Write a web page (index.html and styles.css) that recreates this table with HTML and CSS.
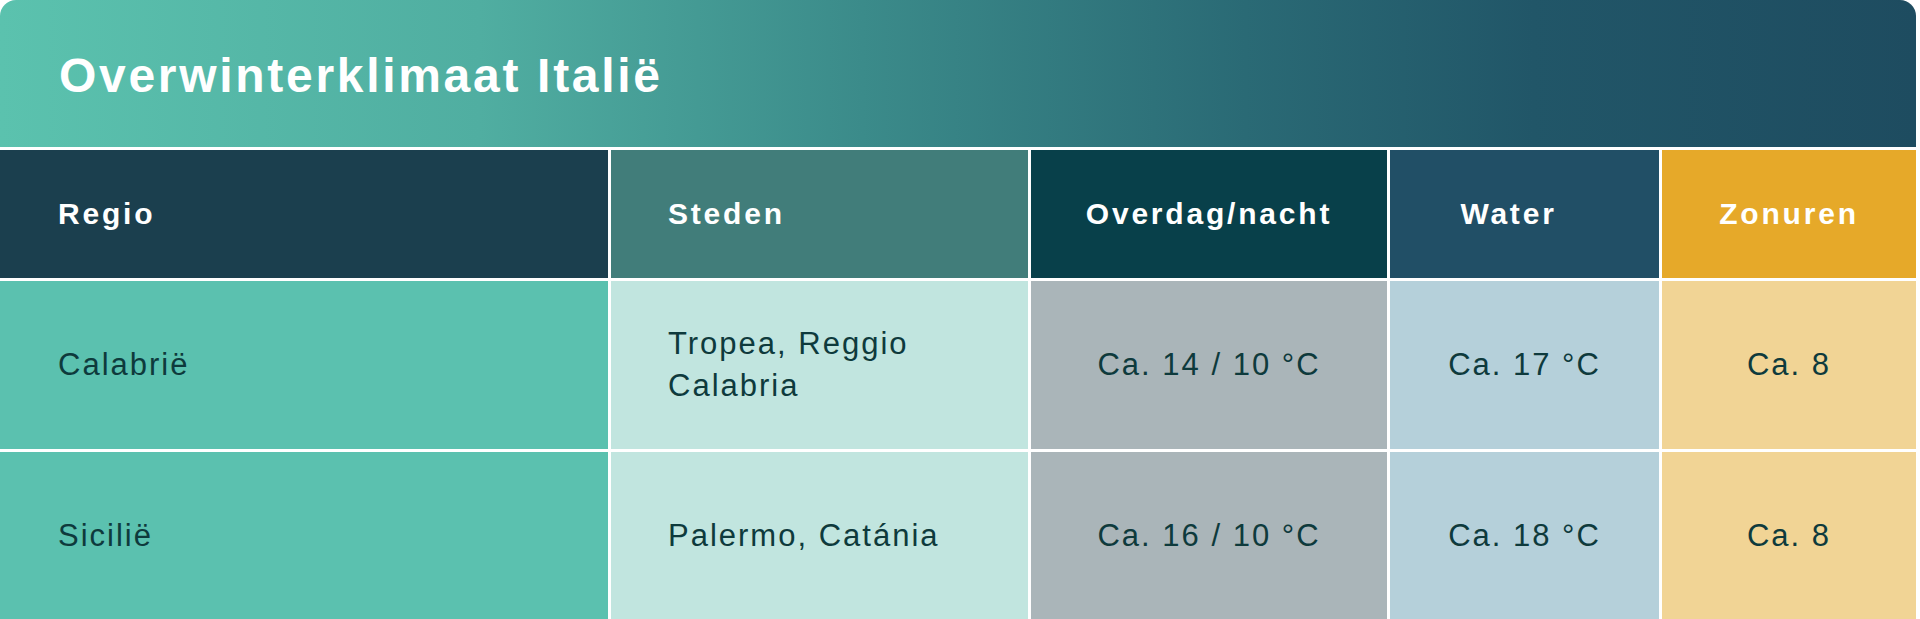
FILE: index.html
```html
<!DOCTYPE html>
<html lang="nl">
<head>
<meta charset="utf-8">
<title>Overwinterklimaat Italië</title>
<link rel="stylesheet" href="styles.css">
</head>
<body>
<div class="card">
  <div class="title-bar">
    <h1 class="title">Overwinterklimaat Italië</h1>
  </div>
  <div class="grid">
    <div class="cell head h-regio">Regio</div>
    <div class="cell head h-steden">Steden</div>
    <div class="cell head h-temp center">Overdag/nacht</div>
    <div class="cell head h-water center water-shift">Water</div>
    <div class="cell head h-zon center">Zonuren</div>

    <div class="cell body c-regio">Calabrië</div>
    <div class="cell body c-steden">Tropea, Reggio<br>Calabria</div>
    <div class="cell body c-temp center">Ca. 14 / 10 °C</div>
    <div class="cell body c-water center">Ca. 17 °C</div>
    <div class="cell body c-zon center">Ca. 8</div>

    <div class="cell body c-regio">Sicilië</div>
    <div class="cell body c-steden">Palermo, Catánia</div>
    <div class="cell body c-temp center">Ca. 16 / 10 °C</div>
    <div class="cell body c-water center">Ca. 18 °C</div>
    <div class="cell body c-zon center">Ca. 8</div>
  </div>
</div>
</body>
</html>
```

FILE: styles.css
```css
html, body {
  margin: 0;
  padding: 0;
  background: #ffffff;
}

body {
  font-family: "Liberation Sans", Arial, sans-serif;
}

.card {
  width: 1916px;
  display: flex;
  flex-direction: column;
  gap: 3px;
  background: #ffffff;
}

.title-bar {
  height: 147px;
  border-radius: 16px 16px 0 0;
  background: linear-gradient(90deg, #5bc2ae 0%, #50aea1 25%, #3b8b8a 45%, #2a6a75 65%, #215668 80%, #1e4c60 100%);
  display: flex;
  align-items: center;
  padding-left: 59px;
  box-sizing: border-box;
}

.title {
  margin: 0;
  color: #ffffff;
  font-size: 48px;
  font-weight: 700;
  letter-spacing: 2.7px;
  line-height: 1;
  padding-top: 4px;
}

.grid {
  display: grid;
  grid-template-columns: 608px 417px 356px 269px 254px;
  grid-template-rows: 128px 168px 168px;
  gap: 3px;
}

.cell {
  display: flex;
  align-items: center;
  padding-left: 58px;
  box-sizing: border-box;
  font-size: 30px;
  line-height: 42px;
}

.cell.center {
  justify-content: center;
  padding-left: 0;
  text-align: center;
}

.head {
  color: #ffffff;
  font-weight: 700;
  letter-spacing: 2.8px;
}

.body {
  color: #0e3a3c;
  font-weight: 400;
  font-size: 31px;
  letter-spacing: 2px;
}

.h-regio { background: #1b3f4e; }
.h-steden { background: #417d7a; padding-left: 57px; }
.h-temp { background: #08404a; }
.h-water { background: #214f66; }
.h-zon { background: #e6a929; }

.water-shift { padding-right: 32px; }

.c-regio { background: #5bc1af; }
.c-steden { background: #c1e5df; padding-left: 57px; }
.c-temp { background: #aab5b9; }
.c-water { background: #b5d0da; }
.c-zon { background: #f1d495; }
```
